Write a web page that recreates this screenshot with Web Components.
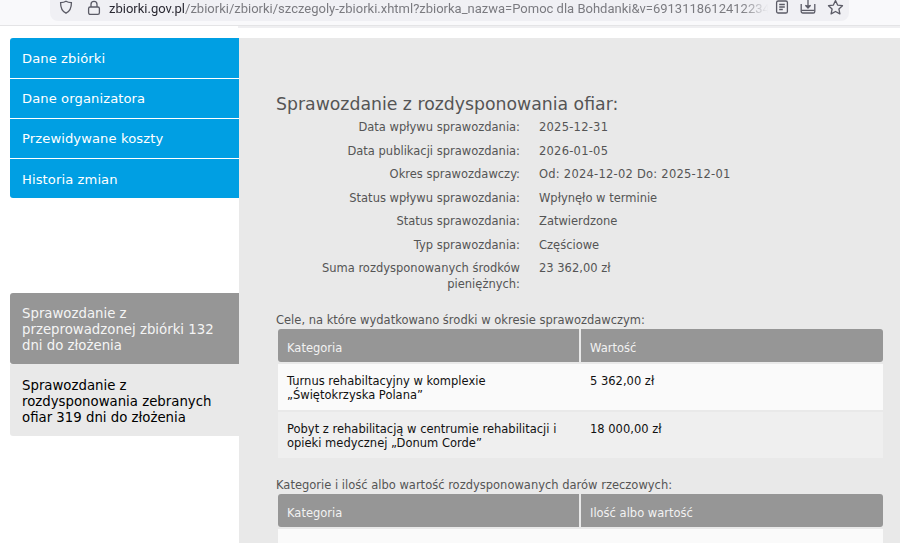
<!DOCTYPE html>
<html lang="pl">
<head>
<meta charset="utf-8">
<title>Sprawozdanie</title>
<style>
  html, body { margin: 0; height: 100%; overflow: hidden; background: #fff; }
  body { font-family: "DejaVu Sans", Verdana, sans-serif; }
</style>
</head>
<body>
<app-shell>
  <browser-bar slot="bar"></browser-bar>
  <side-nav slot="side">
    <nav-item>Dane zbiórki</nav-item>
    <nav-item>Dane organizatora</nav-item>
    <nav-item>Przewidywane koszty</nav-item>
    <nav-item>Historia zmian</nav-item>
    <report-tab slot="reports" mode="closed">Sprawozdanie z przeprowadzonej zbiórki 132 dni do złożenia</report-tab>
    <report-tab slot="reports" mode="open">Sprawozdanie z rozdysponowania zebranych ofiar 319 dni do złożenia</report-tab>
  </side-nav>
  <report-panel slot="main" heading="Sprawozdanie z rozdysponowania ofiar:">
    <info-row wide label="Data wpływu sprawozdania:">2025-12-31</info-row>
    <info-row wide label="Data publikacji sprawozdania:">2026-01-05</info-row>
    <info-row wide label="Okres sprawozdawczy:">Od: 2024-12-02 Do: 2025-12-01</info-row>
    <info-row label="Status wpływu sprawozdania:">Wpłynęło w terminie</info-row>
    <info-row label="Status sprawozdania:">Zatwierdzone</info-row>
    <info-row label="Typ sprawozdania:">Częściowe</info-row>
    <info-row label="Suma rozdysponowanych środków pieniężnych:">23 362,00 zł</info-row>
    <data-table slot="tables" caption="Cele, na które wydatkowano środki w okresie sprawozdawczym:" col-a="Kategoria" col-b="Wartość">
      <table-row a="Turnus rehabiltacyjny w komplexie „Świętokrzyska Polana”" b="5 362,00 zł"></table-row>
      <table-row alt a="Pobyt z rehabilitacją w centrumie rehabilitacji i opieki medycznej „Donum Corde”" b="18 000,00 zł"></table-row>
    </data-table>
    <data-table slot="tables" caption="Kategorie i ilość albo wartość rozdysponowanych darów rzeczowych:" col-a="Kategoria" col-b="Ilość albo wartość">
      <table-row a="&nbsp;" b="&nbsp;"></table-row>
    </data-table>
  </report-panel>
</app-shell>

<script>
// ---- helpers ----
function define(name, css, html, extra) {
  const template = document.createElement('template');
  template.innerHTML = `<style>${css}</style>${html}`;
  customElements.define(name, class extends HTMLElement {
    constructor() {
      super();
      this.attachShadow({ mode: 'open' });
      this.shadowRoot.appendChild(template.content.cloneNode(true));
    }
    connectedCallback() {
      if (extra) extra(this, this.shadowRoot);
    }
  });
}

// ---- page frame ----
define('app-shell', `
  :host { display: flex; flex-direction: column; height: 543px; overflow: hidden; }
  .body { display: flex; align-items: stretch; flex: 1; min-height: 0; padding: 10px 0 0 10px; }
`, `
  <slot name="bar"></slot>
  <div class="body">
    <slot name="side"></slot>
    <slot name="main"></slot>
  </div>
`);

// ---- browser toolbar, cropped at the top ----
define('browser-bar', `
  :host { display: block; height: 28px; background: #fff; flex: none; font-family: Roboto, "Noto Sans", sans-serif; }
  .top { height: 25px; background: #f9f9fb; border-bottom: 1px solid #e4e4e6; padding-left: 50px; }
  .pill { width: 799px; height: 21px; background: #f0f0f4; border-radius: 0 0 8px 8px; display: flex; align-items: center; box-sizing: border-box; padding: 0 5px 0 8px; overflow: hidden; color: #7b7b80; font-size: 13px; }
  .shield { margin-right: 13px; flex: none; }
  .lock { margin-right: 8px; flex: none; }
  .url { flex: 1; min-width: 0; white-space: nowrap; line-height: 20px; margin-top: -4px;
    -webkit-mask-image: linear-gradient(to right, #000 96%, transparent 100%); mask-image: linear-gradient(to right, #000 96%, transparent 100%); }
  .url b { font-weight: 400; color: #2b2a33; }
  .icons { display: flex; align-items: center; gap: 11px; flex: none; margin-left: 7px; margin-top: -7px; }
  svg { display: block; fill: none; stroke: #5b5b66; stroke-width: 1.3; }
  .strip { height: 2px; margin-left: 238px; background: #efeff1; }
`, `
  <div class="top">
    <div class="pill">
      <svg class="shield" width="16" height="16" viewBox="0 0 16 16" style="margin-top:-8px"><path d="M8 2.2 C6.4 3.2 4.4 3.6 2.6 3.7 C2.5 8.6 4.4 12.4 8 14.2 C11.6 12.4 13.5 8.6 13.4 3.7 C11.6 3.6 9.6 3.2 8 2.2Z"/></svg>
      <svg class="lock" width="14" height="16" viewBox="0 0 14 16" style="margin-top:-6px"><rect x="1.6" y="7" width="10.8" height="7.4" rx="1.6"/><path d="M4 7 V4.4 a3 3 0 0 1 6 0 V7"/></svg>
      <div class="url"><b>zbiorki.gov.pl</b>/zbiorki/zbiorki/szczegoly-zbiorki.xhtml?zbiorka_nazwa=Pomoc dla Bohdanki&amp;v=6913118612412234</div>
      <div class="icons">
        <svg width="14" height="16" viewBox="0 0 14 16"><rect x="1.6" y="2" width="10.8" height="12" rx="1.6"/><path d="M4.2 5.5 H9.8 M4.2 8 H9.8 M4.2 10.5 H7.8"/></svg>
        <svg width="16" height="16" viewBox="0 0 16 16"><path d="M1.2 5 V12.4 a1.6 1.6 0 0 0 1.6 1.6 H13.2 a1.6 1.6 0 0 0 1.6 -1.6 V5"/><path d="M1.6 11.4 H14.4"/><path d="M8 1 V8.4"/><path d="M5.4 6.2 L8 9 L10.6 6.2" fill="#5b5b66"/></svg>
        <svg width="17" height="17" viewBox="0 0 17 17"><path d="M8.5 1.6 L10.6 6.1 L15.5 6.7 L11.9 10 L12.9 14.9 L8.5 12.5 L4.1 14.9 L5.1 10 L1.5 6.7 L6.4 6.1 Z" stroke-linejoin="round"/></svg>
      </div>
    </div>
  </div>
  <div class="strip"></div>
`);

// ---- left navigation ----
define('side-nav', `
  :host { display: block; width: 229px; flex: none; background: #fff; }
  .links { display: flex; flex-direction: column; gap: 1px; border-radius: 3px 0 0 3px; overflow: hidden; }
  .reports { display: flex; flex-direction: column; margin-top: 95px; }
`, `
  <div class="links"><slot></slot></div>
  <div class="reports"><slot name="reports"></slot></div>
`);

define('nav-item', `
  :host { display: block; height: 39px; background: #009fe3; color: #fff; font-size: 13.1px; line-height: 39px; padding-left: 12px; letter-spacing: .1px; }
  :host(:first-child) { height: 40px; line-height: 41px; }
  :host(:nth-child(4)) { line-height: 41px; }
`, `<slot></slot>`);

define('report-tab', `
  :host { display: block; box-sizing: border-box; padding: 13px 12px 0; font-size: 13.3px; line-height: 16px; border-radius: 3px 0 0 3px; height: 71px; }
  :host([mode="closed"]) { background: #969696; color: #f4f4f4; }
  :host([mode="open"]) { background: #e9e9e9; color: #000; height: 72px; border-radius: 0 0 0 3px; padding-top: 14px; }
`, `<slot></slot>`);

// ---- report content ----
define('report-panel', `
  :host { display: block; flex: 1; min-width: 0; background: #e9e9e9; box-sizing: border-box; padding: 55px 17px 0 37px; color: #555; }
  h2 { margin: 0; font-size: 17.3px; font-weight: 400; line-height: 22px; color: #555; white-space: nowrap; }
  .tables { display: flex; flex-direction: column; gap: 17px; margin-top: 16px; }
`, `
  <h2></h2>
  <div class="rows"><slot></slot></div>
  <div class="tables"><slot name="tables"></slot></div>
`, (el, root) => {
  root.querySelector('h2').textContent = el.getAttribute('heading');
});

define('info-row', `
  :host { display: grid; grid-template-columns: 244px 1fr; column-gap: 19px; font-size: 11.5px; line-height: 16px; padding: 4px 0 3.5px; color: #555; }
  :host([wide]) .value { letter-spacing: .24px; }
  .label { text-align: right; }
`, `<div class="label"></div><div class="value"><slot></slot></div>`, (el, root) => {
  root.querySelector('.label').textContent = el.getAttribute('label');
});

define('data-table', `
  :host { display: block; font-size: 11.5px; color: #555; }
  .caption { line-height: 16px; margin-bottom: 1px; }
  .grid { margin: 0 0 0 2px; width: 605px; }
  .head { display: grid; grid-template-columns: 303px 1fr; height: 33px; margin-bottom: 2px; }
  .head div { background: #969696; color: #f2f2f2; line-height: 38px; padding-left: 9px; height: 33px; overflow: hidden; }
  .head div:first-child { border-radius: 3px 0 0 3px; border-right: 2px solid #e9e9e9; }
  .head div:last-child { border-radius: 0 3px 3px 0; }
`, `
  <div class="caption"></div>
  <div class="grid">
    <div class="head"><div class="a"></div><div class="b"></div></div>
    <slot></slot>
  </div>
`, (el, root) => {
  root.querySelector('.caption').textContent = el.getAttribute('caption');
  root.querySelector('.a').textContent = el.getAttribute('col-a');
  root.querySelector('.b').textContent = el.getAttribute('col-b');
});

define('table-row', `
  :host { display: grid; grid-template-columns: 303px 1fr; margin-bottom: 2px; color: #111; font-size: 11.5px; line-height: 14px; }
  div { background: #fafafa; padding: 10px 9px 0; height: 36px; }
  div:first-child { border-right: 2px solid #e9e9e9; }
  :host([alt]) div { background: #efefef; }
`, `<div class="a"></div><div class="b"></div>`, (el, root) => {
  root.querySelector('.a').textContent = el.getAttribute('a');
  root.querySelector('.b').textContent = el.getAttribute('b');
});
</script>
</body>
</html>
